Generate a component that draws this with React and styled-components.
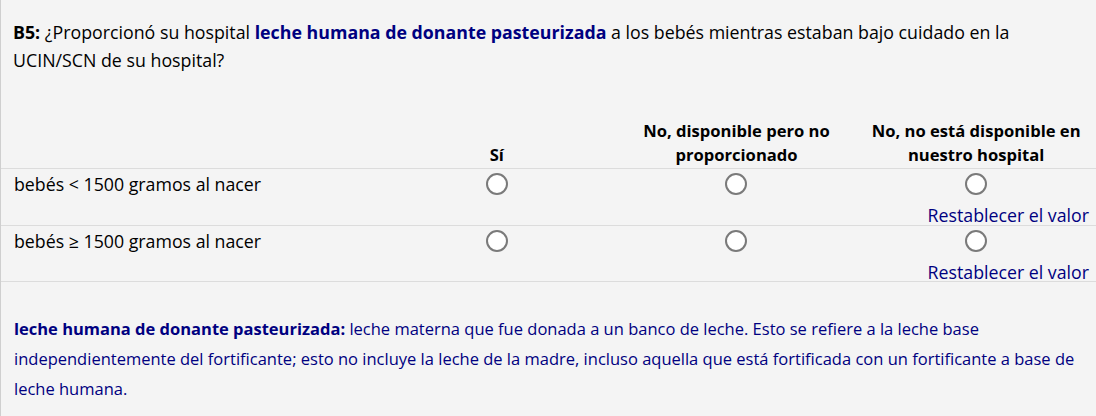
import React, { useState } from "react";
import styled, { createGlobalStyle } from "styled-components";

const rows = [
  { id: "lt", label: "bebés < 1500 gramos al nacer" },
  { id: "ge", label: "bebés ≥ 1500 gramos al nacer" },
];

const columns = [
  "Sí",
  "No, disponible pero no proporcionado",
  "No, no está disponible en nuestro hospital",
];

export default function App() {
  const [values, setValues] = useState({});

  const choose = (rowId, col) => {
    setValues({ ...values, [rowId]: col });
  };

  const reset = (rowId) => {
    const next = { ...values };
    delete next[rowId];
    setValues(next);
  };

  return (
    <>
      <GlobalStyle />
      <Page>
        <Question>
          <Label>B5:</Label> ¿Proporcionó su hospital{" "}
          <Term>leche humana de donante pasteurizada</Term> a los bebés mientras
          estaban bajo cuidado en la UCIN/SCN de su hospital?
        </Question>

        <Matrix>
          <HeadCell />
          {columns.map((c) => (
            <HeadCell key={c}>{c}</HeadCell>
          ))}

          {rows.map((row) => (
            <Row key={row.id}>
              <RowLabel>{row.label}</RowLabel>
              {columns.map((c, i) => (
                <ChoiceCell key={c}>
                  <Radio
                    type="radio"
                    name={row.id}
                    checked={values[row.id] === c}
                    onChange={() => choose(row.id, c)}
                  />
                  {i === columns.length - 1 && (
                    <ResetLink onClick={() => reset(row.id)}>
                      Restablecer el valor
                    </ResetLink>
                  )}
                </ChoiceCell>
              ))}
            </Row>
          ))}
        </Matrix>

        <Note>
          <Term>leche humana de donante pasteurizada:</Term> leche materna que
          fue donada a un banco de leche. Esto se refiere a la leche base
          independientemente del fortificante; esto no incluye la leche de la
          madre, incluso aquella que está fortificada con un fortificante a base
          de leche humana.
        </Note>
      </Page>
    </>
  );
}

const GlobalStyle = createGlobalStyle`
  body {
    margin: 0;
    background: #f4f4f4;
    font-family: "Open Sans", "Noto Sans", sans-serif;
    color: #000;
  }
`;

const Page = styled.div`
  height: 416px;
  border-left: 1px solid #cfcfcf;
  background: #f4f4f4;
  overflow: hidden;
`;

const Question = styled.div`
  padding: 18px 13px 0 12px;
  font-size: 17.8px;
  line-height: 28px;
`;

const Label = styled.b`
  font-weight: 700;
`;

const Term = styled.b`
  font-weight: 700;
  color: #000080;
`;

const Matrix = styled.div`
  display: grid;
  grid-template-columns: 376px repeat(3, 1fr);
  margin-top: 45px;
`;

const HeadCell = styled.div`
  display: flex;
  align-items: flex-end;
  justify-content: center;
  text-align: center;
  font-size: 16.6px;
  font-weight: 700;
  line-height: 24px;
  padding: 0 8px 1px;
  border-bottom: 1px solid #dcdcdc;
`;

const Row = styled.div`
  display: contents;
`;

const RowLabel = styled.div`
  height: 56.5px;
  box-sizing: border-box;
  padding: 3px 13px 0;
  font-size: 17.75px;
  line-height: 24px;
  border-bottom: 1px solid #dcdcdc;
`;

const ChoiceCell = styled.div`
  height: 56.5px;
  box-sizing: border-box;
  display: flex;
  flex-direction: column;
  align-items: center;
  padding-top: 4px;
  border-bottom: 1px solid #dcdcdc;
`;

const Radio = styled.input`
  appearance: none;
  flex-shrink: 0;
  margin: 0;
  width: 22px;
  height: 22px;
  border-radius: 50%;
  border: 2px solid #7a7a7a;
  background: #fff;
  box-sizing: border-box;
  cursor: pointer;
  &:checked {
    background: radial-gradient(#333 0 4px, #fff 5px);
  }
`;

const ResetLink = styled.a`
  flex-shrink: 0;
  align-self: flex-end;
  margin-right: 7px;
  margin-top: 8px;
  font-size: 17.75px;
  line-height: 24px;
  color: #000080;
  cursor: pointer;
`;

const Note = styled.div`
  padding: 32px 13px 0 13px;
  font-size: 16.5px;
  line-height: 30px;
  color: #000080;
`;
